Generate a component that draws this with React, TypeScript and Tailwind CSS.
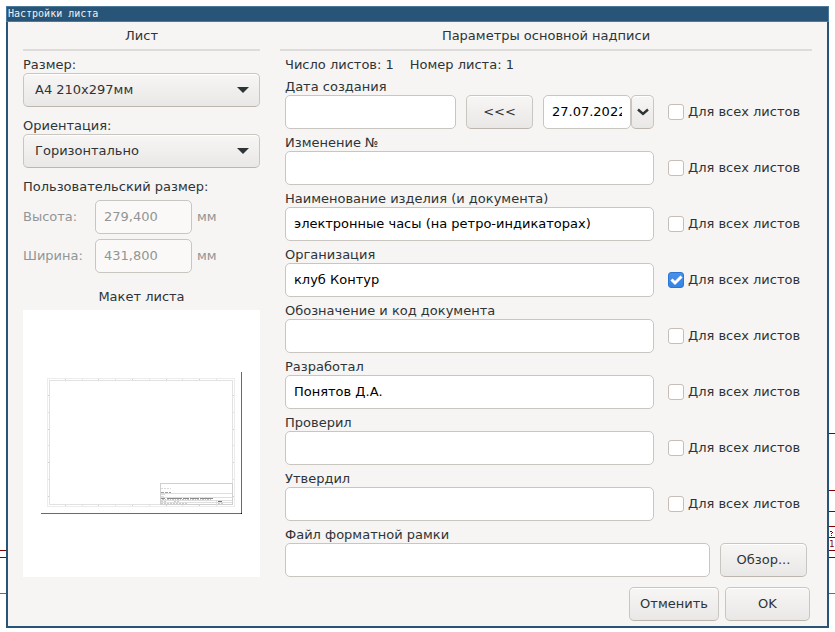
import { useId, useState } from "react";

const boxBorder = "rounded-[5px] border border-[#c9c5c0]";
const fieldClass =
  "h-[34px] min-w-0 bg-white px-2 pb-[2px] text-[13px] text-black outline-none " + boxBorder;
const buttonClass =
  "h-[34px] shrink-0 border-b-[#bdb6ae] bg-linear-to-b from-[#f7f6f5] to-[#eae8e6] text-[13px] text-[#2e3436] shadow-[inset_0_1px_#ffffff] " +
  boxBorder;

function Heading({ children }: { children: string }) {
  return (
    <h2 className="mb-[6px] h-[25px] border-b-2 border-[#dddcda] text-center leading-5">
      {children}
    </h2>
  );
}

function Choice({ label, value, options }: { label: string; value: string; options: string[] }) {
  const id = useId();
  return (
    <div className="mb-[11px] flex flex-col">
      <label htmlFor={id} className="leading-4">
        {label}
      </label>
      <div className="relative flex">
        <select
          id={id}
          defaultValue={value}
          className={"w-full appearance-none pr-8 pl-[11px] " + buttonClass}
        >
          {options.map((o) => (
            <option key={o}>{o}</option>
          ))}
        </select>
        <svg
          className="pointer-events-none absolute top-[14px] right-[11px]"
          width="12"
          height="6"
          viewBox="0 0 12 6"
        >
          <path d="M0 0h12L6 6z" fill="#2e3436" />
        </svg>
      </div>
    </div>
  );
}

function Dimension({ label, value }: { label: string; value: string }) {
  const id = useId();
  return (
    <div className="mb-[5px] flex items-center text-[#929595]">
      <label htmlFor={id} className="w-[72px]">
        {label}
      </label>
      <input
        id={id}
        disabled
        defaultValue={value}
        className={
          "h-[34px] w-[97px] bg-[#faf9f8] px-2 pb-[2px] text-[13px] text-[#929595] " + boxBorder
        }
      />
      <span className="ml-[5px]">мм</span>
    </div>
  );
}

function AllSheets({ initial = false }: { initial?: boolean }) {
  const [on, setOn] = useState(initial);
  return (
    <label className="ml-[14px] flex w-[139px] shrink-0 items-center gap-1 whitespace-nowrap">
      <span className="relative flex">
        <input
          type="checkbox"
          checked={on}
          onChange={() => setOn(!on)}
          className="size-4 appearance-none rounded-[3px] border border-[#c5bfb8] bg-white checked:border-[#2a76d2] checked:bg-linear-to-b checked:from-[#4a90e8] checked:to-[#3584e4]"
        />
        {on && (
          <svg
            className="pointer-events-none absolute inset-0"
            width="16"
            height="16"
            viewBox="0 0 16 16"
          >
            <path d="M3.500 7.500l3.500 3.500 6.500-6.500" fill="none" stroke="#fff" strokeWidth="3" />
          </svg>
        )}
      </span>
      Для всех листов
    </label>
  );
}

function TextRow({ label, value = "", all = false }: { label: string; value?: string; all?: boolean }) {
  const id = useId();
  return (
    <div className="mb-[6px] flex flex-col">
      <label htmlFor={id} className="leading-4">
        {label}
      </label>
      <div className="flex">
        <input id={id} defaultValue={value} className={"flex-1 " + fieldClass} />
        <AllSheets initial={all} />
      </div>
    </div>
  );
}

function SheetPreview() {
  const across = [42, 59, 75, 92, 109, 126, 143, 159, 176, 193];
  const down = [85, 102, 119, 135, 152, 169, 186];
  return (
    <svg className="block w-full bg-white" viewBox="0 0 237 267">
      <path d="M218.500 62V204M18 203.500H219" stroke="#6a6a6a" fill="none" />
      <rect x="218" y="203" width="1" height="1" fill="#000" />
      <g fill="none" stroke="#ececec">
        <rect x="24.500" y="68.500" width="187" height="128" />
        <rect x="26.500" y="70.500" width="183" height="124" stroke="#e2e2e2" />
      </g>
      <g fill="#cfcfcf">
        {across.map((x, i) => (
          <g key={x} opacity={i % 2 ? 0.6 : 1}>
            <rect x={x} y="69" width="1" height="1" />
            <rect x={x} y="195" width="1" height="1" />
          </g>
        ))}
        {down.map((y, i) => (
          <g key={y} opacity={i % 2 ? 0.6 : 1}>
            <rect x="25" y={y} width="1" height="1" />
            <rect x="210" y={y} width="1" height="1" />
          </g>
        ))}
      </g>
      <g fill="none" stroke="#cfcfcf">
        <rect x="137.500" y="173.500" width="72" height="21" fill="#fff" />
        <path d="M138 183.500H209M138 187.500H209M138 190.500H209M138 192.500H209M193.500 190V195" stroke="#dedede" />
      </g>
      <path d="M138 178.500h10" stroke="#d8d8d8" strokeDasharray="2 1" />
      <path d="M138 182.500h10" stroke="#a0a0a0" strokeDasharray="3 1" />
      <path d="M138 184.500h4M138 186.500h3" stroke="#dcdcdc" />
      <path d="M138 188.500h4M144 188.500h15M160 188.500h6M167 188.500h9M177 188.500h13" stroke="#8c8c8c" />
      <path d="M139 189.500h50" stroke="#c4c4c4" strokeDasharray="2 1 1 1" />
      <path d="M138 191.500h6M151 191.500h6M138 193.500h27M195 193.500h6" stroke="#cccccc" strokeDasharray="2 1" />
      <path d="M195 191.500h4" stroke="#777" />
    </svg>
  );
}

/* Wires and page frame of the schematic visible past the dialog's sides. */
function CanvasEdge({ side }: { side: "left" | "right" }) {
  return (
    <svg className="w-[6px] shrink-0" width="6" height="626" viewBox="0 0 6 626">
      {side === "left" ? (
        <g>
          <path d="M0 544.500H6M0 551.500H6" stroke="#840000" />
          <path d="M0 587.500H6" stroke="#6b6b6b" />
        </g>
      ) : (
        <g>
          <path
            d="M0 427.500H6M0 484.500H6M0 505.500H6M0 520.500H6M0 531.500H6M0 544.500H6M0 551.500H6"
            stroke="#840000"
          />
          <path d="M0 587.500H6" stroke="#6b6b6b" />
          <path d="M1 525.500h2M3.500 526v1M2.500 527v1M2 529.500h1" stroke="#840000" />
          <text x="0" y="541" className="font-['DejaVu_Sans_Mono',monospace] text-[9px]" fill="#840000">
            1
          </text>
        </g>
      )}
    </svg>
  );
}

export default function App() {
  return (
    <div className="flex min-h-screen items-start overflow-hidden bg-white pt-[6px] font-['DejaVu_Sans',sans-serif] text-[13px] text-[#2e3436]">
      <CanvasEdge side="left" />
      <main className="min-w-0 flex-1 border-2 border-t-0 border-[#285577] bg-[#f6f5f4]">
        <h1 className="-mx-[2px] h-4 border border-[#4c7899] bg-[#285577] px-px font-['DejaVu_Sans_Mono',monospace] text-[10px] leading-[14px] text-[#f0f0f0]">
          Настройки листа
        </h1>
        <div className="flex gap-5 px-[15px] pt-1">
          <section className="w-[237px] shrink-0">
            <Heading>Лист</Heading>
            <Choice label="Размер:" value="A4 210x297мм" options={["A4 210x297мм", "A3 297x420мм"]} />
            <Choice
              label="Ориентация:"
              value="Горизонтально"
              options={["Горизонтально", "Вертикально"]}
            />
            <p className="mb-[5px] leading-4">Пользовательский размер:</p>
            <Dimension label="Высота:" value="279,400" />
            <Dimension label="Ширина:" value="431,800" />
            <p className="mt-4 mb-[5px] text-center leading-4">Макет листа</p>
            <SheetPreview />
          </section>
          <section className="min-w-0 flex-1">
            <Heading>Параметры основной надписи</Heading>
            <div className="px-[5px]">
              <p className="mb-[6px] flex gap-4 leading-4">
                <span>Число листов: 1</span>
                <span>Номер листа: 1</span>
              </p>
              <div className="mb-[6px] flex flex-col">
                <label htmlFor="issue-date" className="leading-4">
                  Дата создания
                </label>
                <div className="flex">
                  <input id="issue-date" className={"flex-1 " + fieldClass} />
                  <button className={"mx-[10px] w-[67px] " + buttonClass}>&lt;&lt;&lt;</button>
                  <input
                    aria-label="Дата"
                    defaultValue="27.07.2022"
                    className={"w-[88px] shrink-0 " + fieldClass}
                  />
                  <button
                    aria-label="Календарь"
                    className={"flex w-[23px] items-center justify-center " + buttonClass}
                  >
                    <svg width="12" height="8" viewBox="0 0 12 8">
                      <path d="M1 1.500l5 4.500 5-4.500" fill="none" stroke="#2e3436" strokeWidth="2.400" />
                    </svg>
                  </button>
                  <AllSheets />
                </div>
              </div>
              <TextRow label="Изменение №" />
              <TextRow
                label="Наименование изделия (и документа)"
                value="электронные часы (на ретро-индикаторах)"
              />
              <TextRow label="Организация" value="клуб Контур" all />
              <TextRow label="Обозначение и код документа" />
              <TextRow label="Разработал" value="Понятов Д.А." />
              <TextRow label="Проверил" />
              <TextRow label="Утвердил" />
              <div className="flex flex-col">
                <label htmlFor="frame-file" className="leading-4">
                  Файл форматной рамки
                </label>
                <div className="flex gap-[10px]">
                  <input id="frame-file" className={"flex-1 " + fieldClass} />
                  <button className={"w-[87px] " + buttonClass}>Обзор...</button>
                </div>
              </div>
            </div>
          </section>
        </div>
        <footer className="flex justify-end gap-[6px] px-[17px] pt-[10px] pb-[5px]">
          <button className={"w-[90px] " + buttonClass}>Отменить</button>
          <button className={"w-[85px] " + buttonClass}>OK</button>
        </footer>
      </main>
      <CanvasEdge side="right" />
    </div>
  );
}
